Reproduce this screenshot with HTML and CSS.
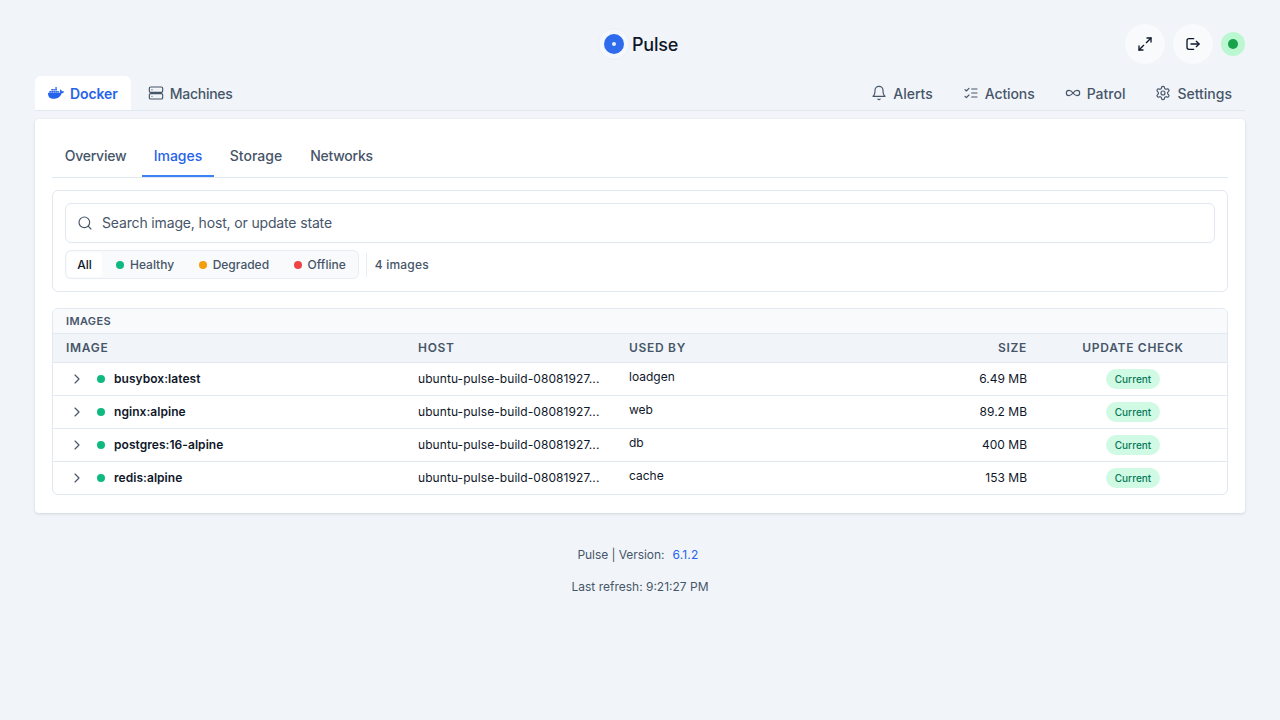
FILE: index.html
```html
<!DOCTYPE html>
<html lang="en">
<head>
	<meta name="viewport" content="width=device-width, initial-scale=1">
	<title>Pulse</title>
	<link rel="stylesheet" href="styles.css">
</head>
<body>
<header class="top">
	<div class="brand">
		<span class="logo"><span class="logo-disc"><span class="logo-dot"></span></span></span>
		<span class="brand-name">Pulse</span>
	</div>
	<div class="top-actions">
		<button class="round-btn" aria-label="Expand">
			<svg width="16" height="16" viewBox="0 0 24 24" fill="none" stroke="currentColor" stroke-width="2" stroke-linecap="round" stroke-linejoin="round"><path d="M15 3h6v6"/><path d="M21 3l-7 7"/><path d="M3 21l7-7"/><path d="M3 15v6h6"/></svg>
		</button>
		<button class="round-btn" aria-label="Log out">
			<svg width="16" height="16" viewBox="0 0 24 24" fill="none" stroke="currentColor" stroke-width="2" stroke-linecap="round" stroke-linejoin="round"><path d="M13 20H6a3 3 0 0 1-3-3V7a3 3 0 0 1 3-3h7"/><path d="M9 12h12"/><path d="M17 8l4 4-4 4"/></svg>
		</button>
		<span class="status-ring"><span class="status-dot"></span></span>
	</div>
</header>

<nav class="main-nav">
	<div class="nav-group">
		<a class="nav-tab active">
			<svg width="16" height="16" viewBox="0 0 24 24" fill="currentColor"><path d="M13.98 11.08h2.12a.19.19 0 0 0 .19-.19V9.01a.19.19 0 0 0-.19-.19h-2.12a.19.19 0 0 0-.19.19v1.88c0 .1.09.19.19.19m-2.95-5.43h2.12a.19.19 0 0 0 .19-.19V3.58a.19.19 0 0 0-.19-.19h-2.12a.19.19 0 0 0-.19.19v1.88c0 .1.09.19.19.19m0 2.71h2.12a.19.19 0 0 0 .19-.19V6.29a.19.19 0 0 0-.19-.19h-2.12a.19.19 0 0 0-.19.19v1.88c0 .1.09.19.19.19m-2.93 0h2.12a.19.19 0 0 0 .19-.19V6.29a.19.19 0 0 0-.19-.19H8.1a.19.19 0 0 0-.19.19v1.88c0 .1.08.19.19.19m-2.96 0h2.12a.19.19 0 0 0 .19-.19V6.29a.19.19 0 0 0-.19-.19H5.14a.19.19 0 0 0-.19.19v1.88c0 .1.09.19.19.19m5.89 2.72h2.12a.19.19 0 0 0 .19-.19V9.01a.19.19 0 0 0-.19-.19h-2.12a.19.19 0 0 0-.19.19v1.88c0 .1.09.19.19.19m-2.93 0h2.12a.19.19 0 0 0 .19-.19V9.01a.19.19 0 0 0-.19-.19H8.1a.19.19 0 0 0-.19.19v1.88c0 .1.08.19.19.19m-2.96 0h2.12a.19.19 0 0 0 .19-.19V9.01a.19.19 0 0 0-.19-.19H5.14a.19.19 0 0 0-.19.19v1.88c0 .1.09.19.19.19m-2.92 0h2.12a.19.19 0 0 0 .19-.19V9.01a.19.19 0 0 0-.19-.19H2.22a.19.19 0 0 0-.19.19v1.88c0 .1.08.19.19.19M23.76 9.89c-.06-.05-.67-.51-1.95-.51-.34 0-.68.03-1.01.09-.25-1.7-1.65-2.53-1.72-2.57l-.34-.2-.23.33c-.28.44-.49.92-.61 1.43-.23.97-.09 1.88.4 2.66-.59.33-1.55.41-1.74.42H.75a.75.75 0 0 0-.75.75 11.4 11.4 0 0 0 .7 4.06c.55 1.44 1.37 2.51 2.44 3.16 1.2.73 3.14 1.15 5.34 1.15.99 0 1.98-.09 2.96-.27a12.25 12.25 0 0 0 3.87-1.4 10.66 10.66 0 0 0 2.64-2.16c1.27-1.43 2.02-3.03 2.58-4.45h.22c1.38 0 2.23-.55 2.7-1.02.31-.3.56-.66.71-1.07l.1-.29z"/></svg>
			Docker
		</a>
		<a class="nav-tab tight">
			<svg width="16" height="16" viewBox="0 0 24 24" fill="none" stroke="currentColor" stroke-width="1.75" stroke-linecap="round" stroke-linejoin="round"><rect x="2" y="3" width="20" height="8" rx="2"/><rect x="2" y="13" width="20" height="8" rx="2"/><path d="M6 7h.01"/><path d="M6 17h.01"/></svg>
			Machines
		</a>
	</div>
	<div class="nav-group">
		<a class="nav-tab">
			<svg width="16" height="16" viewBox="0 0 24 24" fill="none" stroke="currentColor" stroke-width="1.75" stroke-linecap="round" stroke-linejoin="round"><path d="M6 8a6 6 0 0 1 12 0c0 7 3 9 3 9H3s3-2 3-9"/><path d="M10.3 21a1.94 1.94 0 0 0 3.4 0"/></svg>
			Alerts
		</a>
		<a class="nav-tab actions-tab">
			<svg width="16" height="16" viewBox="0 0 24 24" fill="none" stroke="currentColor" stroke-width="1.75" stroke-linecap="round" stroke-linejoin="round"><path d="M13 6h8"/><path d="M13 12h8"/><path d="M13 18h8"/><path d="M3 17l2 2 4-4"/><path d="M3 7l2 2 4-4"/></svg>
			Actions
		</a>
		<a class="nav-tab">
			<svg width="16" height="16" viewBox="0 0 24 24" fill="none" stroke="currentColor" stroke-width="1.75" stroke-linecap="round" stroke-linejoin="round"><path d="M12 12c-2-2.67-4-4-6-4a4 4 0 1 0 0 8c2 0 4-1.33 6-4Zm0 0c2 2.67 4 4 6 4a4 4 0 0 0 0-8c-2 0-4 1.33-6 4Z"/></svg>
			Patrol
		</a>
		<a class="nav-tab">
			<svg width="16" height="16" viewBox="0 0 24 24" fill="none" stroke="currentColor" stroke-width="1.75" stroke-linecap="round" stroke-linejoin="round"><path d="M12.22 2h-.44a2 2 0 0 0-2 2v.18a2 2 0 0 1-1 1.73l-.43.25a2 2 0 0 1-2 0l-.15-.08a2 2 0 0 0-2.73.73l-.22.38a2 2 0 0 0 .73 2.73l.15.1a2 2 0 0 1 1 1.72v.51a2 2 0 0 1-1 1.74l-.15.09a2 2 0 0 0-.73 2.73l.22.38a2 2 0 0 0 2.73.73l.15-.08a2 2 0 0 1 2 0l.43.25a2 2 0 0 1 1 1.73V20a2 2 0 0 0 2 2h.44a2 2 0 0 0 2-2v-.18a2 2 0 0 1 1-1.73l.43-.25a2 2 0 0 1 2 0l.15.08a2 2 0 0 0 2.73-.73l.22-.39a2 2 0 0 0-.73-2.73l-.15-.08a2 2 0 0 1-1-1.74v-.5a2 2 0 0 1 1-1.74l.15-.09a2 2 0 0 0 .73-2.73l-.22-.38a2 2 0 0 0-2.73-.73l-.15.08a2 2 0 0 1-2 0l-.43-.25a2 2 0 0 1-1-1.73V4a2 2 0 0 0-2-2z"/><circle cx="12" cy="12" r="3"/></svg>
			Settings
		</a>
	</div>
</nav>

<main class="panel">
	<div class="sub-tabs">
		<a class="sub-tab tight">Overview</a>
		<a class="sub-tab active">Images</a>
		<a class="sub-tab">Storage</a>
		<a class="sub-tab tight">Networks</a>
	</div>

	<section class="filters">
		<div class="search">
			<svg width="16" height="16" viewBox="0 0 24 24" fill="none" stroke="currentColor" stroke-width="1.75" stroke-linecap="round" stroke-linejoin="round"><circle cx="11" cy="11" r="8"/><path d="M21 21l-4.3-4.3"/></svg>
			<span>Search image, host, or update state</span>
		</div>
		<div class="filter-row">
			<div class="segments">
				<span class="segment active">All</span>
				<span class="segment"><i class="dot green"></i>Healthy</span>
				<span class="segment"><i class="dot amber"></i>Degraded</span>
				<span class="segment"><i class="dot red"></i>Offline</span>
			</div>
			<span class="divider"></span>
			<span class="count">4 images</span>
		</div>
	</section>

	<section class="table-card">
		<div class="table-title">IMAGES</div>
		<table>
			<colgroup>
				<col class="col-image"><col class="col-host"><col class="col-used"><col class="col-size"><col>
			</colgroup>
			<thead>
				<tr>
					<th>IMAGE</th>
					<th>HOST</th>
					<th>USED BY</th>
					<th class="right">SIZE</th>
					<th class="center">UPDATE CHECK</th>
				</tr>
			</thead>
			<tbody>
				<tr>
					<td><div class="name-cell"><svg class="chev" width="16" height="16" viewBox="0 0 24 24" fill="none" stroke="currentColor" stroke-width="1.75" stroke-linecap="round" stroke-linejoin="round"><path d="M9 18l6-6-6-6"/></svg><i class="dot green"></i><b>busybox:latest</b></div></td>
					<td class="host">ubuntu-pulse-build-08081927...</td>
					<td><span class="used">loadgen</span></td>
					<td class="right">6.49 MB</td>
					<td class="center"><span class="badge">Current</span></td>
				</tr>
				<tr>
					<td><div class="name-cell"><svg class="chev" width="16" height="16" viewBox="0 0 24 24" fill="none" stroke="currentColor" stroke-width="1.75" stroke-linecap="round" stroke-linejoin="round"><path d="M9 18l6-6-6-6"/></svg><i class="dot green"></i><b>nginx:alpine</b></div></td>
					<td class="host">ubuntu-pulse-build-08081927...</td>
					<td><span class="used">web</span></td>
					<td class="right">89.2 MB</td>
					<td class="center"><span class="badge">Current</span></td>
				</tr>
				<tr>
					<td><div class="name-cell"><svg class="chev" width="16" height="16" viewBox="0 0 24 24" fill="none" stroke="currentColor" stroke-width="1.75" stroke-linecap="round" stroke-linejoin="round"><path d="M9 18l6-6-6-6"/></svg><i class="dot green"></i><b>postgres:16-alpine</b></div></td>
					<td class="host">ubuntu-pulse-build-08081927...</td>
					<td><span class="used">db</span></td>
					<td class="right">400 MB</td>
					<td class="center"><span class="badge">Current</span></td>
				</tr>
				<tr>
					<td><div class="name-cell"><svg class="chev" width="16" height="16" viewBox="0 0 24 24" fill="none" stroke="currentColor" stroke-width="1.75" stroke-linecap="round" stroke-linejoin="round"><path d="M9 18l6-6-6-6"/></svg><i class="dot green"></i><b>redis:alpine</b></div></td>
					<td class="host">ubuntu-pulse-build-08081927...</td>
					<td><span class="used">cache</span></td>
					<td class="right">153 MB</td>
					<td class="center"><span class="badge">Current</span></td>
				</tr>
			</tbody>
		</table>
	</section>
</main>

<footer class="foot">
	<div class="foot-line version-line"><span class="foot-label">Pulse | Version:</span><a class="version">6.1.2</a></div>
	<div class="foot-line">Last refresh: 9:21:27 PM</div>
</footer>
</body>
</html>
```

FILE: styles.css
```css
* {
	box-sizing: border-box;
	margin: 0;
	padding: 0;
}

body {
	font-family: Inter, 'Noto Sans', sans-serif;
	background: #f1f5f9;
	color: #0f172a;
	padding: 24px 35px 0;
	min-height: 100vh;
	font-size: 14px;
}

.top {
	display: flex;
	align-items: center;
	justify-content: center;
	height: 40px;
	position: relative;
}

.brand {
	display: flex;
	align-items: center;
	gap: 2px;
	margin-right: 4px;
}

.logo {
	width: 32px;
	height: 32px;
	border-radius: 50%;
	background: #f4f7fb;
	border: 1px solid #edf1f7;
	display: flex;
	align-items: center;
	justify-content: center;
}

.logo-disc {
	width: 20px;
	height: 20px;
	border-radius: 50%;
	background: #2f6bed;
	display: flex;
	align-items: center;
	justify-content: center;
}

.logo-dot {
	width: 4px;
	height: 4px;
	border-radius: 50%;
	background: #e8effd;
}

.brand-name {
	font-size: 18px;
	font-weight: 500;
	letter-spacing: -0.25px;
	color: #0f172a;
}

.top-actions {
	position: absolute;
	right: 0;
	top: 0;
	display: flex;
	align-items: center;
	gap: 8px;
}

.round-btn {
	width: 40px;
	height: 40px;
	border: 0;
	border-radius: 50%;
	background: #f8fafc;
	color: #0f172a;
	display: flex;
	align-items: center;
	justify-content: center;
}

.status-ring {
	width: 24px;
	height: 24px;
	border-radius: 50%;
	background: #bbf7d0;
	display: flex;
	align-items: center;
	justify-content: center;
}

.status-dot {
	width: 10px;
	height: 10px;
	border-radius: 50%;
	background: #16a34a;
}

.main-nav {
	display: flex;
	justify-content: space-between;
	margin-top: 12px;
	height: 35px;
	border-bottom: 1px solid #e2e8f0;
}

.nav-group {
	display: flex;
	gap: 4px;
}

.nav-tab {
	display: flex;
	align-items: center;
	gap: 6px;
	height: 34px;
	padding: 0 13px;
	font-size: 14px;
	font-weight: 500;
	color: #475569;
	border-radius: 6px 6px 0 0;
}

.nav-tab.active {
	background: #fff;
	color: #2563eb;
	font-weight: 600;
	letter-spacing: -0.1px;
}

.actions-tab {
	letter-spacing: -0.1px;
}

.tight {
	letter-spacing: -0.25px;
}

.panel {
	margin-top: 8px;
	background: #fff;
	border-radius: 4px;
	box-shadow: 0 1px 3px rgba(15, 23, 42, 0.14);
	padding: 17px;
	height: 394px;
}

.sub-tabs {
	display: grid;
	grid-template-columns: 85px 72px 76px 87px;
	gap: 4px;
	height: 42px;
	padding-left: 1px;
	border-bottom: 1px solid #e2e8f0;
}

.sub-tab {
	height: 41px;
	line-height: 40px;
	text-align: center;
	font-size: 14px;
	font-weight: 500;
	color: #475569;
}

.sub-tab.active {
	color: #2563eb;
	border-bottom: 2px solid #3b82f6;
}

.filters {
	margin-top: 12px;
	height: 102px;
	padding: 12px;
	border: 1px solid #e2e8f0;
	border-radius: 6px;
}

.search {
	display: flex;
	align-items: center;
	gap: 9px;
	height: 40px;
	padding: 0 11px 1px;
	border: 1px solid #e2e8f0;
	border-radius: 6px;
	color: #475569;
	font-size: 14px;
	letter-spacing: -0.15px;
}

.filter-row {
	display: flex;
	align-items: center;
	margin-top: 7px;
	height: 29px;
	font-size: 12px;
	font-weight: 500;
	color: #475569;
}

.segments {
	display: flex;
	align-items: center;
	gap: 0.5px;
	height: 29px;
	padding-left: 1px;
	background: #f8fafc;
	border: 1px solid #e8edf3;
	border-radius: 6px;
}

.segment {
	display: flex;
	align-items: center;
	gap: 6px;
	height: 25px;
	padding: 0 12px;
	border-radius: 4px;
}

.segment.active {
	width: 35px;
	padding: 0;
	justify-content: center;
	margin-right: 1.5px;
	background: #fff;
	color: #0f172a;
}

.dot {
	width: 8px;
	height: 8px;
	border-radius: 50%;
	display: block;
	flex: none;
}

.green { background: #10b981; }
.amber { background: #f59e0b; }
.red { background: #ef4444; }

.divider {
	width: 1px;
	height: 24px;
	background: #e8edf3;
	margin: 0 8px 0 7px;
}

.count {
	letter-spacing: 0.2px;
}

.table-card {
	margin-top: 16px;
	height: 187px;
	border: 1px solid #e2e8f0;
	border-radius: 6px;
	overflow: hidden;
}

.table-title {
	height: 25px;
	line-height: 24px;
	padding: 0 13px;
	background: #f8fafc;
	border-bottom: 1px solid #e2e8f0;
	font-size: 11px;
	font-weight: 600;
	letter-spacing: 0.35px;
	color: #475569;
}

table {
	width: 100%;
	table-layout: fixed;
	border-collapse: collapse;
	font-size: 12px;
}

.col-image { width: 352px; }
.col-host { width: 211px; }
.col-used { width: 275px; }
.col-size { width: 148px; }

th {
	height: 28px;
	padding: 0 12px 0 13px;
	background: #f1f5f9;
	border-bottom: 1px solid #e2e8f0;
	text-align: left;
	font-size: 12px;
	font-weight: 600;
	letter-spacing: 0.7px;
	color: #475569;
}

td {
	height: 33px;
	padding: 0 12px 0 13px;
	border-bottom: 1px solid #e2e8f0;
	white-space: nowrap;
	color: #0f172a;
}

tbody tr:last-child td {
	border-bottom: 0;
}

.name-cell {
	display: flex;
	align-items: center;
}

.chev {
	color: #475569;
	margin-left: 3px;
	margin-right: 12px;
}

.name-cell b {
	font-weight: 600;
	margin-left: 9px;
	letter-spacing: 0.05px;
}

.host {
	letter-spacing: 0.07px;
}

.used {
	display: block;
	margin-bottom: 4px;
}

.right {
	text-align: right;
}

.center {
	text-align: center;
	padding-left: 0;
	padding-right: 0;
}

.badge {
	display: inline-block;
	height: 20px;
	line-height: 21px;
	padding: 0 8.5px;
	border-radius: 10px;
	background: #d1fae5;
	color: #047857;
	font-size: 10px;
	font-weight: 500;
	letter-spacing: 0.05px;
	vertical-align: middle;
}

.foot {
	margin-top: 33px;
	font-size: 12px;
	color: #475569;
	text-align: center;
}

.foot-line {
	height: 18px;
	line-height: 18px;
	margin-bottom: 14px;
}

.version-line {
	padding-right: 4px;
}

.foot-label {
	letter-spacing: -0.06px;
}

.version {
	color: #2563eb;
	margin-left: 8px;
	letter-spacing: 0.2px;
}
```
